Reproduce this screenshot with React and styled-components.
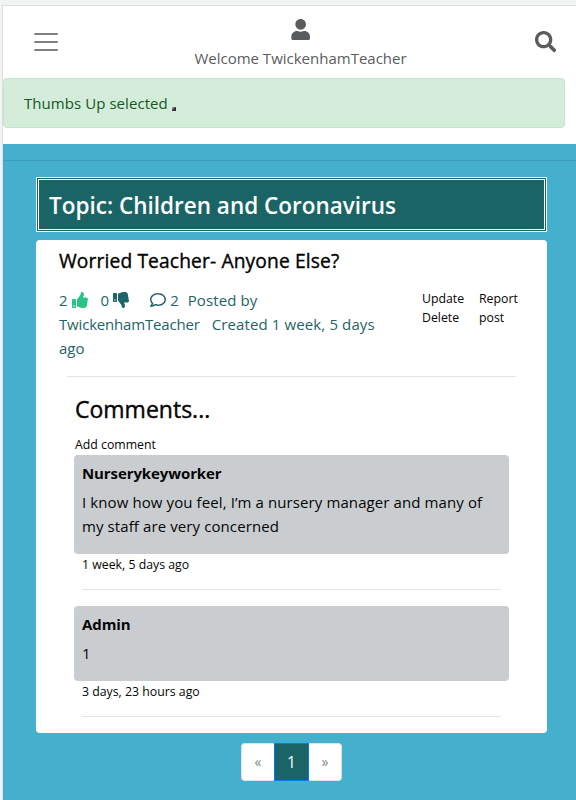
import React from 'react';
import styled, { createGlobalStyle } from 'styled-components';
import { FaUser, FaSearch, FaThumbsUp, FaThumbsDown, FaRegComment } from 'react-icons/fa';

const GlobalStyle = createGlobalStyle`
  * { box-sizing: border-box; }
  body { margin: 0; background: #f2f4f4; font: 15px/24px "Open Sans", sans-serif; }
  h1, h2, h3, h4, p { margin: 0; }
  svg { display: block; }
`;

const Window = styled.div`
  margin: 5px 0 0 2px;
  height: 795px;
  border: solid #dcdfdf;
  border-width: 1px 0 0 1px;
  background: #fff;
  overflow: hidden;
`;

const Header = styled.header`
  height: 72px;
  display: grid;
  grid-template-columns: 88px 1fr 65px;
`;

const MenuButton = styled.button`
  width: 30px;
  height: 30px;
  margin: 21px 0 0 28px;
  padding: 0;
  border: 0;
  background: none;
`;

const Welcome = styled.div`
  display: flex;
  flex-direction: column;
  align-items: center;
  padding: 13px 0 0 0;
  margin-left: -1px;
  color: #595c5e;
  white-space: nowrap;

  svg { margin-bottom: 6px; }
`;

const SearchButton = styled.button`
  padding: 0;
  margin: 25px 0 0 24px;
  width: 22px;
  height: 22px;
  border: 0;
  background: none;
  color: #595c5e;
`;

const Alert = styled.div`
  width: 562px;
  height: 50px;
  padding: 12px 20px;
  border: 1px solid #c3e6cb;
  border-radius: 4px;
  background: #d4edda;
  color: #155724;
  display: flex;
  letter-spacing: 0.06px;
`;

const Mark = styled.i`
  width: 4px;
  height: 4px;
  margin: 16px 0 0 4px;
  background: linear-gradient(135deg, #999 15%, #302b30 60%);
`;

const Forum = styled.main`
  height: 656px;
  margin-top: 16px;
  padding: 16px 29px 0 33px;
  background: #44b0cd;
`;

const TopRule = styled.div`
  height: 1px;
  margin: 0 -29px 16px -33px;
  background: #3d9eb9;
`;

const Topic = styled.h1`
  height: 55px;
  border: 3px double #fff;
  background: #1a6466;
  color: #fff;
  padding: 11px 10px;
  font-size: 22.5px;
  line-height: 30px;
  font-weight: 600;
`;

const Card = styled.article`
  height: 493px;
  margin-top: 8px;
  padding: 9px 23px 0;
  border-radius: 4px;
  background: #fff;
  color: #050505;
`;

const PostTitle = styled.h2`
  font-size: 19.2px;
  line-height: 24px;
  font-weight: 500;
  letter-spacing: 0.14px;
  -webkit-text-stroke: 0.35px;
  color: #000;
`;

const PostInfo = styled.div`
  display: flex;
  margin-top: 15px;
  height: 72px;
`;

const Meta = styled.div`
  width: 336px;
  color: #1f6467;
`;

const Line = styled.div`
  display: flex;
  align-items: center;
  height: 24px;
  gap: ${(p) => p.$gap || 0}px;
  white-space: nowrap;
`;

const Part = styled.span`
  letter-spacing: ${(p) => p.$spacing || 0}px;
`;

const Up = styled(FaThumbsUp)`
  color: #28c486;
  margin: 0 13px 0 4px;
`;

const Down = styled(FaThumbsDown)`
  margin: 0 21px 0 4px;
`;

const Bubble = styled(FaRegComment)`
  margin-right: 4px;
`;

const PostedBy = styled.span`
  margin-left: 9px;
  letter-spacing: 0.1px;
`;

const Actions = styled.div`
  width: 45px;
  margin: 1px 0 0 ${(p) => p.$offset}px;
  font-size: 12.3px;
  line-height: 19px;
`;

const Rule = styled.div`
  height: 1px;
  margin: ${(p) => p.$margin};
  background: #e3e4e5;
`;

const Comments = styled.section`
  padding: 18px 15px 0;
`;

const CommentsTitle = styled.h3`
  font-size: 23px;
  line-height: 29px;
  font-weight: 500;
  -webkit-text-stroke: 0.4px;
  padding-left: 1px;
`;

const AddComment = styled.div`
  padding: 11px 0 0 1px;
  font-size: 12.3px;
  line-height: 20px;
`;

const Comment = styled.div`
  height: ${(p) => p.$height}px;
  padding: 6px 8px;
  border-radius: 4px;
  background: #c9cdd0;
`;

const Author = styled.h4`
  font-size: 15px;
  font-weight: 700;
  line-height: 24px;
  letter-spacing: -0.1px;
  margin-bottom: 5px;
`;

const Body = styled.p`
  letter-spacing: 0.1px;
  white-space: pre-line;
`;

const Time = styled.div`
  padding: 1px 8px 0;
  font-size: 12.3px;
  line-height: 20px;
`;

const Pager = styled.nav`
  display: flex;
  width: 101px;
  height: 38px;
  margin: 10px auto 0;
`;

const PageItem = styled.a`
  width: ${(p) => (p.$active ? 35 : 33)}px;
  display: flex;
  align-items: center;
  justify-content: center;
  border: 1px solid ${(p) => (p.$active ? '#007bff' : '#dee2e6')};
  background: ${(p) => (p.$active ? '#1a6466' : '#fff')};
  color: ${(p) => (p.$active ? '#fff' : '#7b858d')};
  font-size: ${(p) => (p.$active ? 15.5 : 14)}px;
  &:first-child { border-radius: 4px 0 0 4px; border-right: 0; }
  &:last-child { border-radius: 0 4px 4px 0; border-left: 0; }
`;

const comments = [
  {
    author: 'Nurserykeyworker',
    text: 'I know how you feel, I’m a nursery manager and many of\nmy staff are very concerned',
    time: '1 week, 5 days ago',
    height: 99,
  },
  { author: 'Admin', text: '1', time: '3 days, 23 hours ago', height: 75 },
];

export default function App() {
  return (
    <Window>
      <GlobalStyle />
      <Header>
        <MenuButton aria-label="Menu">
          <svg width="30" height="30" viewBox="0 0 30 30" fill="none">
            <path d="M4 7h22M4 15h22M4 23h22" stroke="#808080" strokeWidth="2" strokeLinecap="round" />
          </svg>
        </MenuButton>
        <Welcome>
          <FaUser size={21.33} />
          Welcome TwickenhamTeacher
        </Welcome>
        <SearchButton aria-label="Search">
          <FaSearch size={21.33} />
        </SearchButton>
      </Header>
      <Alert>Thumbs Up selected<Mark /></Alert>
      <Forum>
        <TopRule />
        <Topic>Topic: Children and Coronavirus</Topic>
        <Card>
          <PostTitle>Worried Teacher- Anyone Else?</PostTitle>
          <PostInfo>
            <Meta>
              <Line>
                <Part>2</Part><Up size={16} />
                <Part>0</Part><Down size={16} />
                <Bubble size={16} /><Part>2</Part>
                <PostedBy>Posted by</PostedBy>
              </Line>
              <Line $gap={12}>
                <Part $spacing={-0.18}>TwickenhamTeacher</Part>
                <Part $spacing={0.12}>Created 1 week, 5 days</Part>
              </Line>
              <Line>ago</Line>
            </Meta>
            <Actions $offset={27}>Update<br />Delete</Actions>
            <Actions $offset={12}>Report<br />post</Actions>
          </PostInfo>
          <Rule $margin="16px 8px 0" />
          <Comments>
            <CommentsTitle>Comments...</CommentsTitle>
            <AddComment>Add comment</AddComment>
            {comments.map((c) => (
              <React.Fragment key={c.author}>
                <Comment $height={c.height}>
                  <Author>{c.author}</Author>
                  <Body>{c.text}</Body>
                </Comment>
                <Time>{c.time}</Time>
                <Rule $margin="14px 8px 16px" />
              </React.Fragment>
            ))}
          </Comments>
        </Card>
        <Pager>
          <PageItem>«</PageItem>
          <PageItem $active>1</PageItem>
          <PageItem>»</PageItem>
        </Pager>
      </Forum>
    </Window>
  );
}
